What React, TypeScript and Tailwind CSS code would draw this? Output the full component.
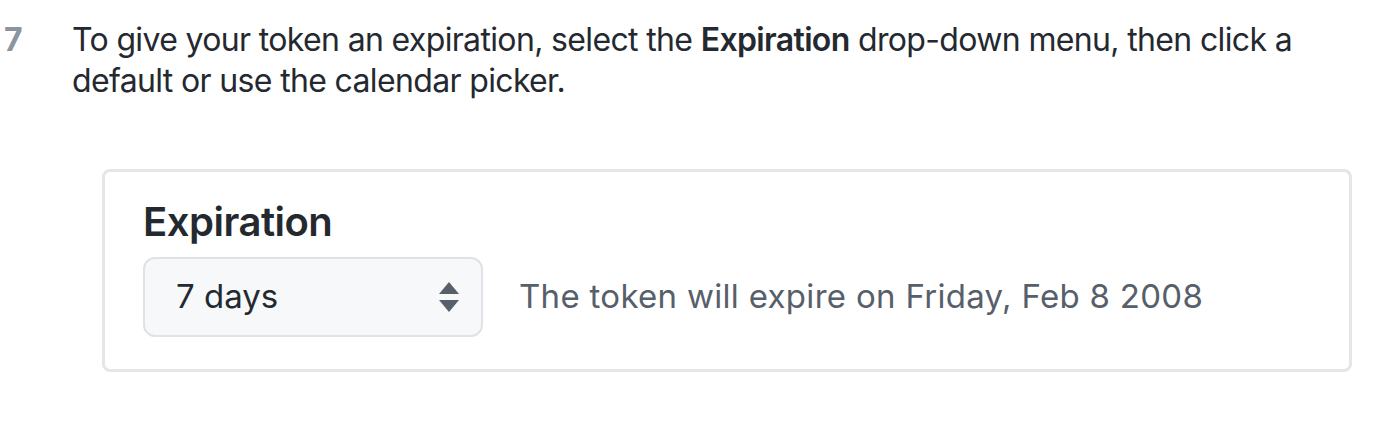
export default function App() {
  return (
    <div className="w-[1378px] h-[426px] bg-white text-[#24292f] font-['Inter',sans-serif]">
      <div className="flex pt-[19px]">
        <div className="w-[72px] shrink-0 pl-[4px] text-[32px] leading-[41px] font-bold text-[#8c959f]">7</div>
        <div className="flex-1 min-w-0">
          <p className="w-[1250px] text-[32px] leading-[41px] tracking-[-0.65px]">
            To give your token an expiration, select the <b className="font-semibold">Expiration</b> drop-down menu, then click a default or use the calendar picker.
          </p>
          <div className="mt-[68px] ml-[30px] w-[1250px] h-[203px] border-[3px] border-[#e4e6e9] rounded-[8px] pl-[38px] pt-[26px]">
            <div className="text-[40px] leading-[48px] font-semibold tracking-[-0.5px]">Expiration</div>
            <div className="mt-[11px] flex items-center">
              <div className="w-[340px] h-[80px] rounded-[12px] border-2 border-[#dfe2e6] bg-[#f6f8fa] flex items-center justify-between pl-[31px] pr-[22px]">
                <span className="text-[33px]">7 days</span>
                <svg width="20" height="30" viewBox="0 0 20 30" fill="#57606a">
                  <path d="M10 0 L20 12 H0 Z" />
                  <path d="M10 30 L20 18 H0 Z" />
                </svg>
              </div>
              <span className="ml-[36px] text-[33px] tracking-[0.3px] text-[#57606a]">The token will expire on Friday, Feb 8 2008</span>
            </div>
          </div>
        </div>
      </div>
    </div>
  );
}
